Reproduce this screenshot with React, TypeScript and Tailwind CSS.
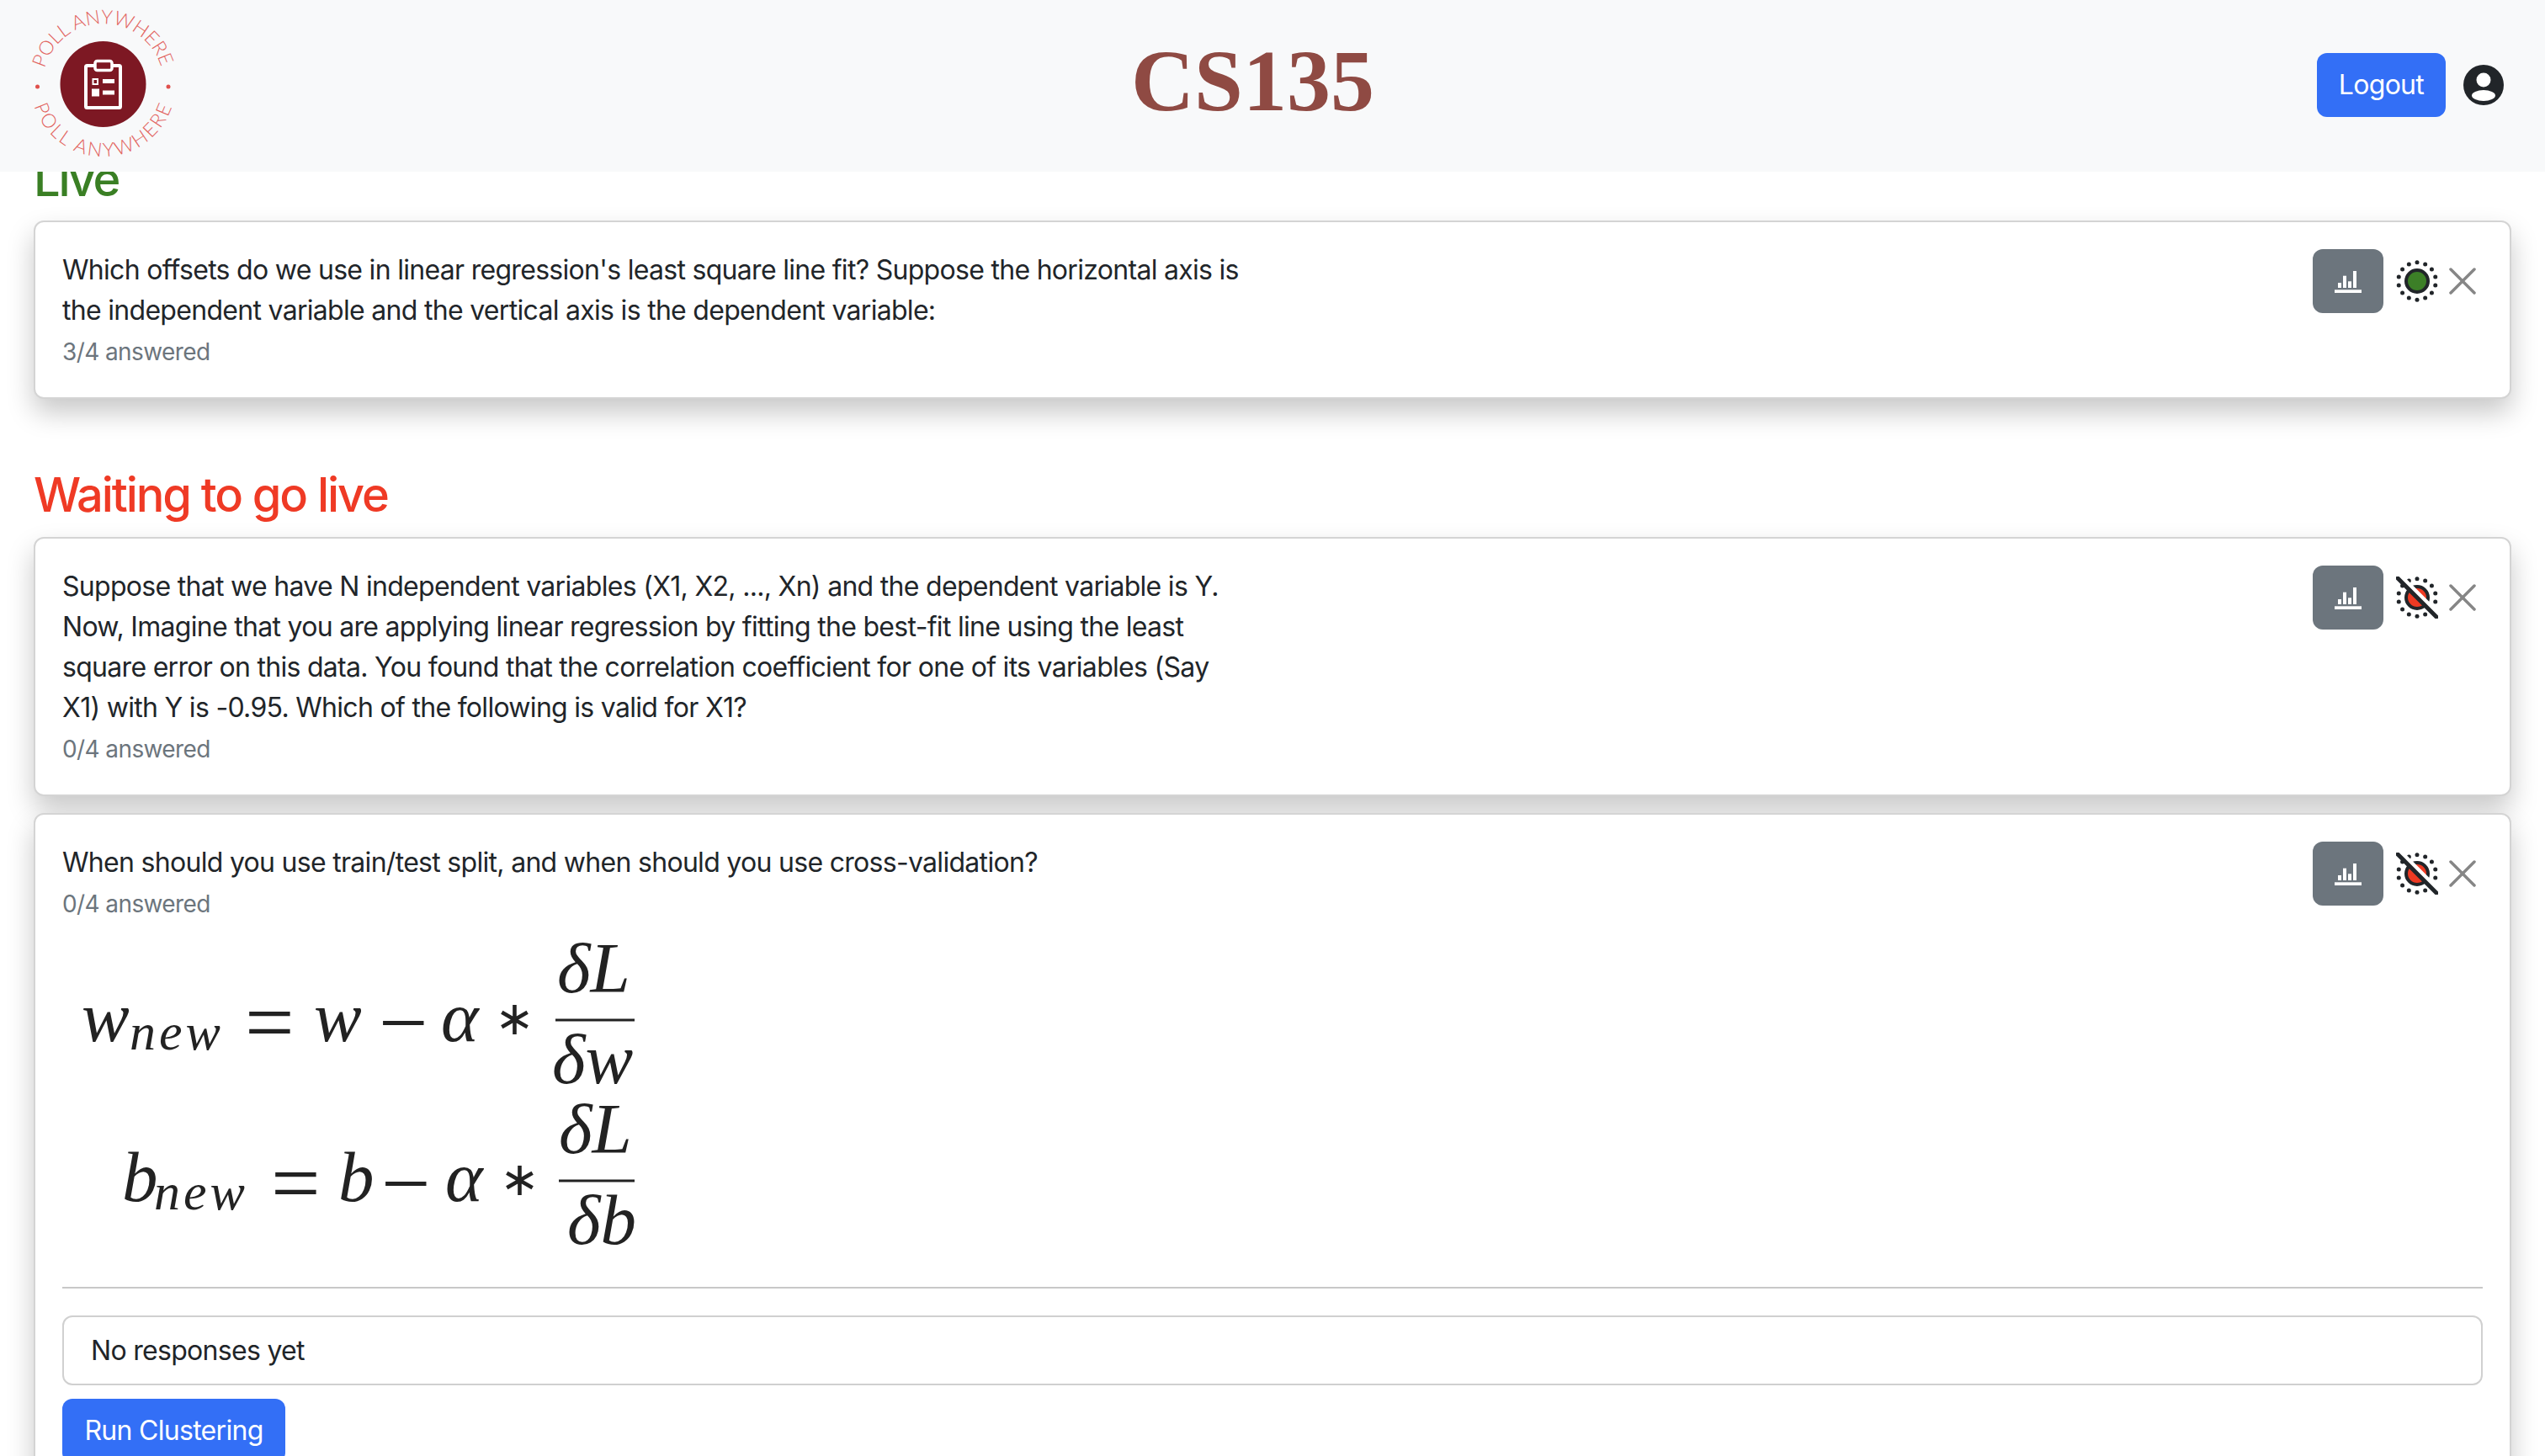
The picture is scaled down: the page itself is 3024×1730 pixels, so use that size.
import type { ReactNode } from "react";

const Logo = () => (
  <svg viewBox="0 0 224 204" className="w-[224px] h-[204px] shrink-0">
    <defs>
      <path id="ringTop" d="M 53 81.4 A 72 72 0 0 1 192 81.4" />
      <path id="ringBottom" d="M 40.5 125.9 A 86 86 0 0 0 204.5 125.9" />
    </defs>
    <circle cx="122.5" cy="100" r="51" fill="#7d1823" />
    <text fill="#e2645f" fontFamily="Lato, sans-serif" fontWeight="300" fontSize="23">
      <textPath href="#ringTop" textLength="186" lengthAdjust="spacing">POLL ANYWHERE</textPath>
    </text>
    <text fill="#e2645f" fontFamily="Lato, sans-serif" fontWeight="300" fontSize="23">
      <textPath href="#ringBottom" textLength="216" lengthAdjust="spacing">POLL ANYWHERE</textPath>
    </text>
    <circle cx="44.5" cy="103" r="2.5" fill="#e0504c" />
    <circle cx="200" cy="103" r="2.5" fill="#e0504c" />
    <rect x="102" y="78" width="41" height="50" rx="1.5" fill="none" stroke="#fff" strokeWidth="4" />
    <rect x="113" y="72.5" width="20" height="11" rx="2.5" fill="#7d1823" stroke="#fff" strokeWidth="3.5" />
    <rect x="110.5" y="94" width="5.5" height="6" fill="none" stroke="#fff" strokeWidth="2" />
    <rect x="122" y="94" width="14" height="5" fill="#fff" />
    <rect x="109" y="105.5" width="9" height="9" fill="#fff" />
    <rect x="122" y="107.5" width="14" height="5" fill="#fff" />
  </svg>
);

const ProfileIcon = () => (
  <svg viewBox="0 0 48 48" className="w-12 h-12 ml-[21px]">
    <circle cx="24" cy="24" r="24" fill="#212529" />
    <circle cx="24" cy="18" r="8.5" fill="#fff" />
    <ellipse cx="24" cy="36.5" rx="14" ry="6.5" fill="#fff" />
  </svg>
);

const BarsIcon = () => (
  <svg viewBox="0 0 32 32" className="w-8 h-8" fill="#fff">
    <rect x="4" y="18" width="4" height="6" />
    <rect x="10" y="9.7" width="4" height="14.3" />
    <rect x="16" y="16.3" width="4" height="7.7" />
    <rect x="22" y="4" width="4" height="20" />
    <rect x="0" y="26.3" width="32" height="3.7" />
  </svg>
);

const dots = Array.from({ length: 14 }, (_, i) => {
  const a = (i * 2 * Math.PI) / 14;
  return { cx: 25 + 22.3 * Math.sin(a), cy: 25 - 22.3 * Math.cos(a) };
});

const StatusIcon = ({ live }: { live: boolean }) => (
  <svg viewBox="0 0 50 50" className="w-[50px] h-[50px] ml-[15px]">
    {dots.map((d) => (
      <circle key={d.cx + "-" + d.cy} cx={d.cx} cy={d.cy} r="2.5" fill="#212529" />
    ))}
    <circle cx="25" cy="25" r="13" fill={live ? "#3c7f27" : "#ee3a23"} stroke="#212529" strokeWidth="4" />
    {!live && (
      <>
        <line x1="6" y1="0" x2="50" y2="44" stroke="#fff" strokeWidth="5" />
        <line x1="2" y1="2" x2="48" y2="48" stroke="#212529" strokeWidth="5" strokeLinecap="round" />
      </>
    )}
  </svg>
);

const CloseIcon = () => (
  <div className="w-12 h-12 ml-[5px] flex items-center justify-center">
    <svg viewBox="0 0 32 32" className="w-8 h-8" stroke="#868686" strokeWidth="3.5" strokeLinecap="round">
      <line x1="2" y1="2" x2="30" y2="30" />
      <line x1="30" y1="2" x2="2" y2="30" />
    </svg>
  </div>
);

const Actions = ({ live }: { live: boolean }) => (
  <div className="flex items-center self-start shrink-0 -mt-px">
    <div className="w-[84px] h-[76px] rounded-xl bg-[#6c757d] flex items-center justify-center">
      <BarsIcon />
    </div>
    <StatusIcon live={live} />
    <CloseIcon />
  </div>
);

const Question = ({ live, answered, children }: { live: boolean; answered: string; children: ReactNode }) => (
  <div className="flex justify-between">
    <div>
      <p className="text-[32px] leading-[48px] tracking-[-0.7px] text-[#212529]">{children}</p>
      <p className="mt-1 text-[28px] leading-[42px] tracking-[-0.6px] text-[#6c757d]">{answered}</p>
    </div>
    <Actions live={live} />
  </div>
);

const Card = ({ children }: { children: ReactNode }) => (
  <div className="mb-5 rounded-xl border-2 border-[#d4d4d4] bg-white px-8 py-[33px] shadow-[0_16px_32px_rgba(0,0,0,0.22)]">
    {children}
  </div>
);

const Formula = () => (
  <svg viewBox="0 -2 780 434" className="w-[780px] h-[434px] block" fontFamily="'Liberation Serif', serif" fontStyle="italic" fill="#222">
    <g fontSize="85">
      <text x="23" y="140">w</text>
      <text x="299" y="140">w</text>
      <text x="450" y="140">α</text>
      <text x="588" y="82">δL</text>
      <text x="582" y="190">δw</text>
      <text x="71" y="330">b</text>
      <text x="328" y="330">b</text>
      <text x="455" y="330">α</text>
      <text x="590" y="273">δL</text>
      <text x="600" y="381">δb</text>
    </g>
    <g fontSize="62" letterSpacing="4">
      <text x="80" y="150">new</text>
      <text x="109" y="340">new</text>
    </g>
    <g fontSize="104" fontStyle="normal">
      <text x="217" y="153">=</text>
      <text x="376" y="153">−</text>
      <text x="248" y="344">=</text>
      <text x="379" y="344">−</text>
    </g>
    <g fontSize="56" fontStyle="normal">
      <text x="514" y="132">∗</text>
      <text x="520" y="323">∗</text>
    </g>
    <line x1="586" y1="115" x2="680" y2="115" stroke="#222" strokeWidth="3" />
    <line x1="590" y1="306" x2="680" y2="306" stroke="#222" strokeWidth="3" />
  </svg>
);

export default function App() {
  return (
    <div className="h-[1730px] overflow-hidden bg-white font-['Inter',sans-serif]">
      <header className="relative z-10 flex h-[204px] items-center justify-between bg-[#f8f9fa]">
        <Logo />
        <h1 className="font-['Liberation_Serif',serif] text-[104px] font-bold leading-none text-[#8f4a43] -mt-[12px]">CS135</h1>
        <div className="flex w-[271px] items-center -mt-[2px]">
          <button className="h-[76px] w-[153px] rounded-xl bg-[#336ff6] text-[32px] tracking-[-0.7px] text-white">Logout</button>
          <ProfileIcon />
        </div>
      </header>
      <main className="-mt-[25px] px-[40px]">
        <h3 className="mb-4 pt-[2px] text-[56px] font-medium leading-[65px] tracking-[-2.1px] text-[#3a7f24]">Live</h3>
        <Card>
          <Question live answered="3/4 answered">
            Which offsets do we use in linear regression's least square line fit? Suppose the horizontal axis is
            <br />
            the independent variable and the vertical axis is the dependent variable:
          </Question>
        </Card>
        <h3 className="mt-[81px] mb-4 text-[56px] font-medium leading-[67px] tracking-[-2.1px] text-[#ef3a25]">Waiting to go live</h3>
        <Card>
          <Question live={false} answered="0/4 answered">
            Suppose that we have N independent variables (X1, X2, ..., Xn) and the dependent variable is Y.
            <br />
            Now, Imagine that you are applying linear regression by fitting the best-fit line using the least
            <br />
            square error on this data. You found that the correlation coefficient for one of its variables (Say
            <br />
            X1) with Y is -0.95. Which of the following is valid for X1?
          </Question>
        </Card>
        <Card>
          <Question live={false} answered="0/4 answered">
            When should you use train/test split, and when should you use cross-validation?
          </Question>
          <Formula />
          <hr className="border-t-2 border-[#c8c8c8]" />
          <div className="mt-8 flex h-[83px] items-center rounded-xl border-2 border-[#d0d0d0] px-8 text-[32px] tracking-[-0.7px] text-[#212529]">
            No responses yet
          </div>
          <button className="mt-4 h-[76px] w-[265px] rounded-xl bg-[#336ff6] text-[32px] tracking-[-0.7px] text-white">Run Clustering</button>
        </Card>
      </main>
    </div>
  );
}
